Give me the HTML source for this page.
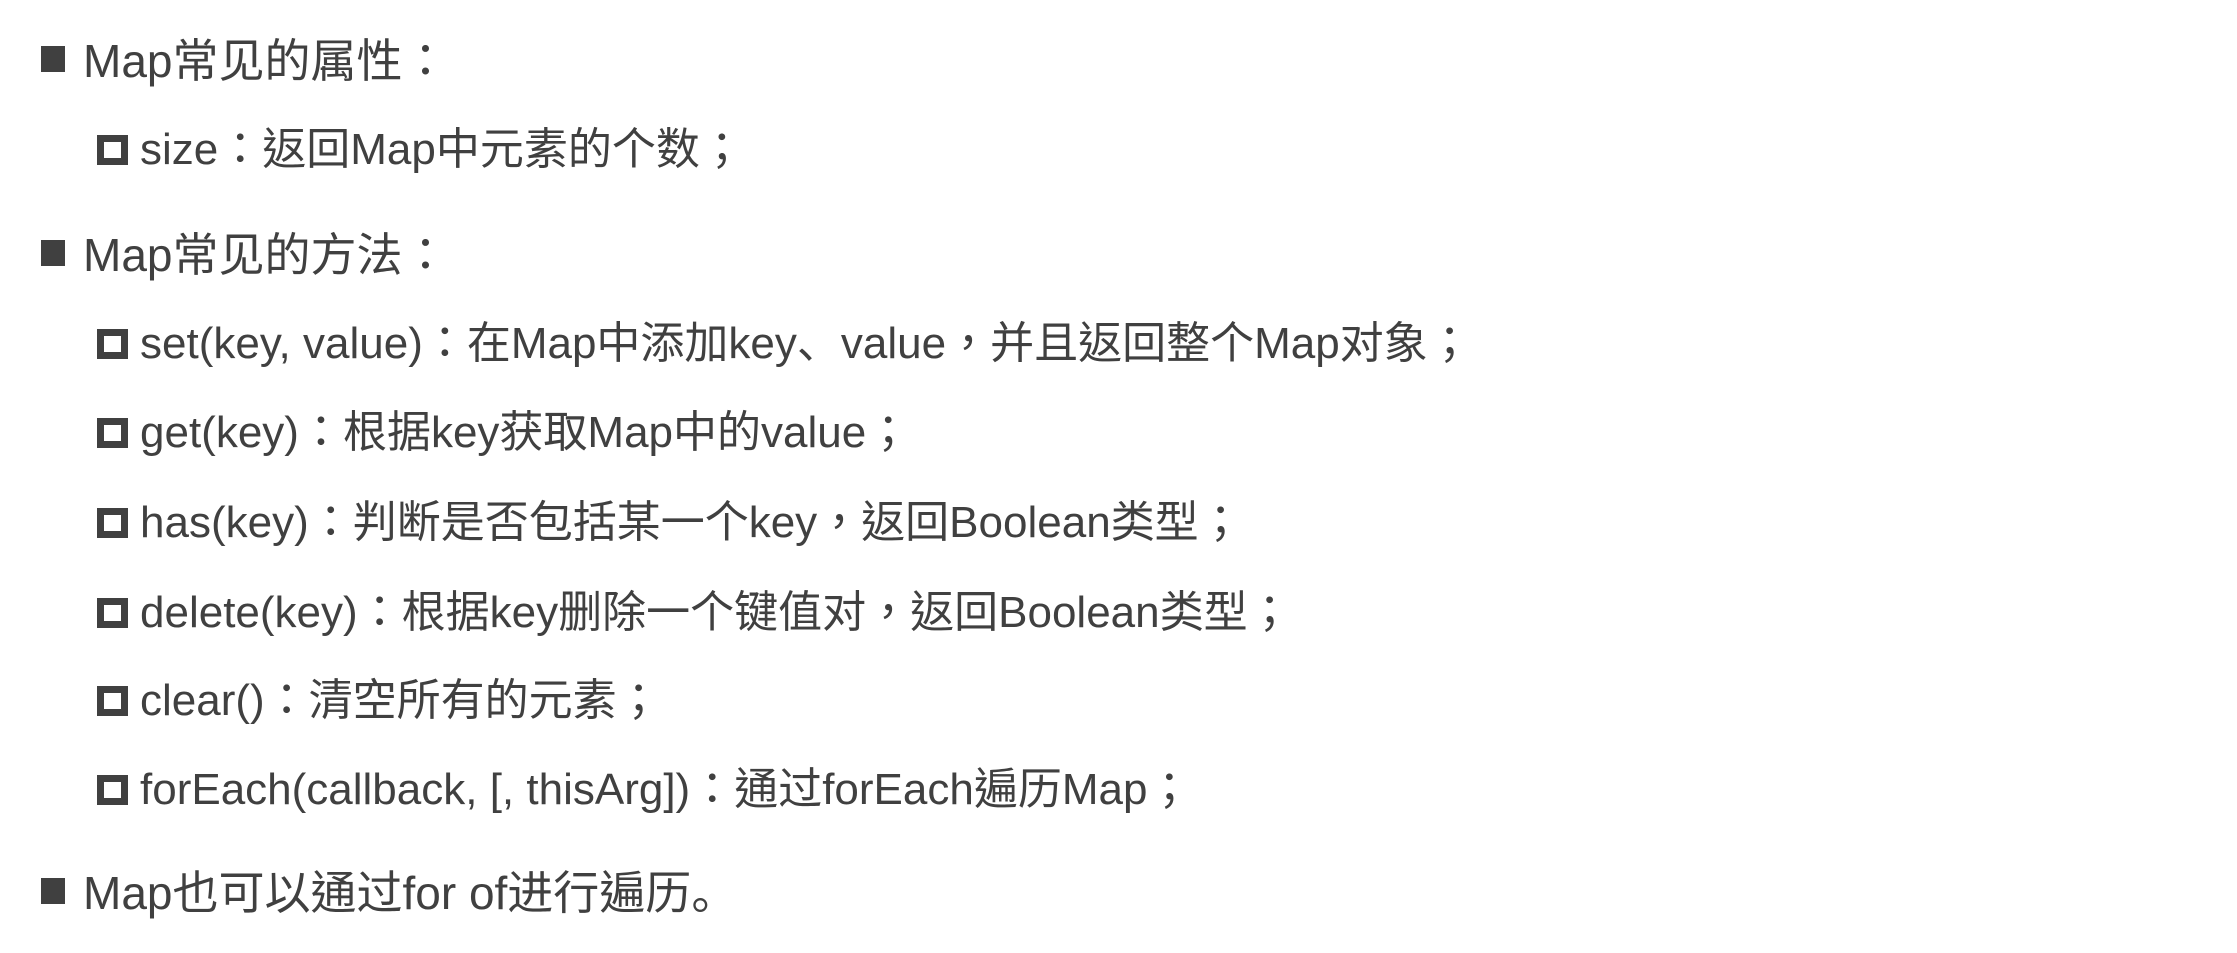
<!DOCTYPE html>
<html><head><meta charset="utf-8"><style>
html,body{margin:0;padding:0;background:#fff;width:2237px;height:953px;overflow:hidden}
body{font-family:"Liberation Sans","Noto Sans CJK TC",sans-serif;color:#404040;position:relative}
.r{position:absolute;white-space:nowrap;line-height:1}
.m{left:83px;font-size:46px}
.s{left:140px;font-size:44px}
.fb{position:absolute;left:41px;width:24px;height:26px;background:#404040}
.hb{position:absolute;left:97px;width:17px;height:16px;border:7px solid #404040}
.sc{font-family:"Noto Sans CJK SC",sans-serif;line-height:0}
</style></head><body>
<div class="fb" style="top:46px"></div><div class="r m" style="top:38px">Map常见的属性：</div>
<div class="hb" style="top:135px"></div><div class="r s" style="top:128px">size：返回Map中元素的个数；</div>
<div class="fb" style="top:240px"></div><div class="r m" style="top:232px">Map常见的方法：</div>
<div class="hb" style="top:329px"></div><div class="r s" style="top:322px">set(key, value)：在Map中添加key<span class="sc">、</span>value，并且返回整个Map对象；</div>
<div class="hb" style="top:418px"></div><div class="r s" style="top:411px">get(key)：根据key获取Map中的value；</div>
<div class="hb" style="top:508px"></div><div class="r s" style="top:501px">has(key)：判断是否包括某一个key，返回Boolean类型；</div>
<div class="hb" style="top:598px"></div><div class="r s" style="top:591px">delete(key)：根据key删除一个键值对，返回Boolean类型；</div>
<div class="hb" style="top:686px"></div><div class="r s" style="top:679px">clear()：清空所有的元素；</div>
<div class="hb" style="top:775px"></div><div class="r s" style="top:768px">forEach(callback, [, thisArg])：通过forEach遍历Map；</div>
<div class="fb" style="top:878px"></div><div class="r m" style="top:870px">Map也可以通过for of进行遍历<span class="sc">。</span></div>
</body></html>
